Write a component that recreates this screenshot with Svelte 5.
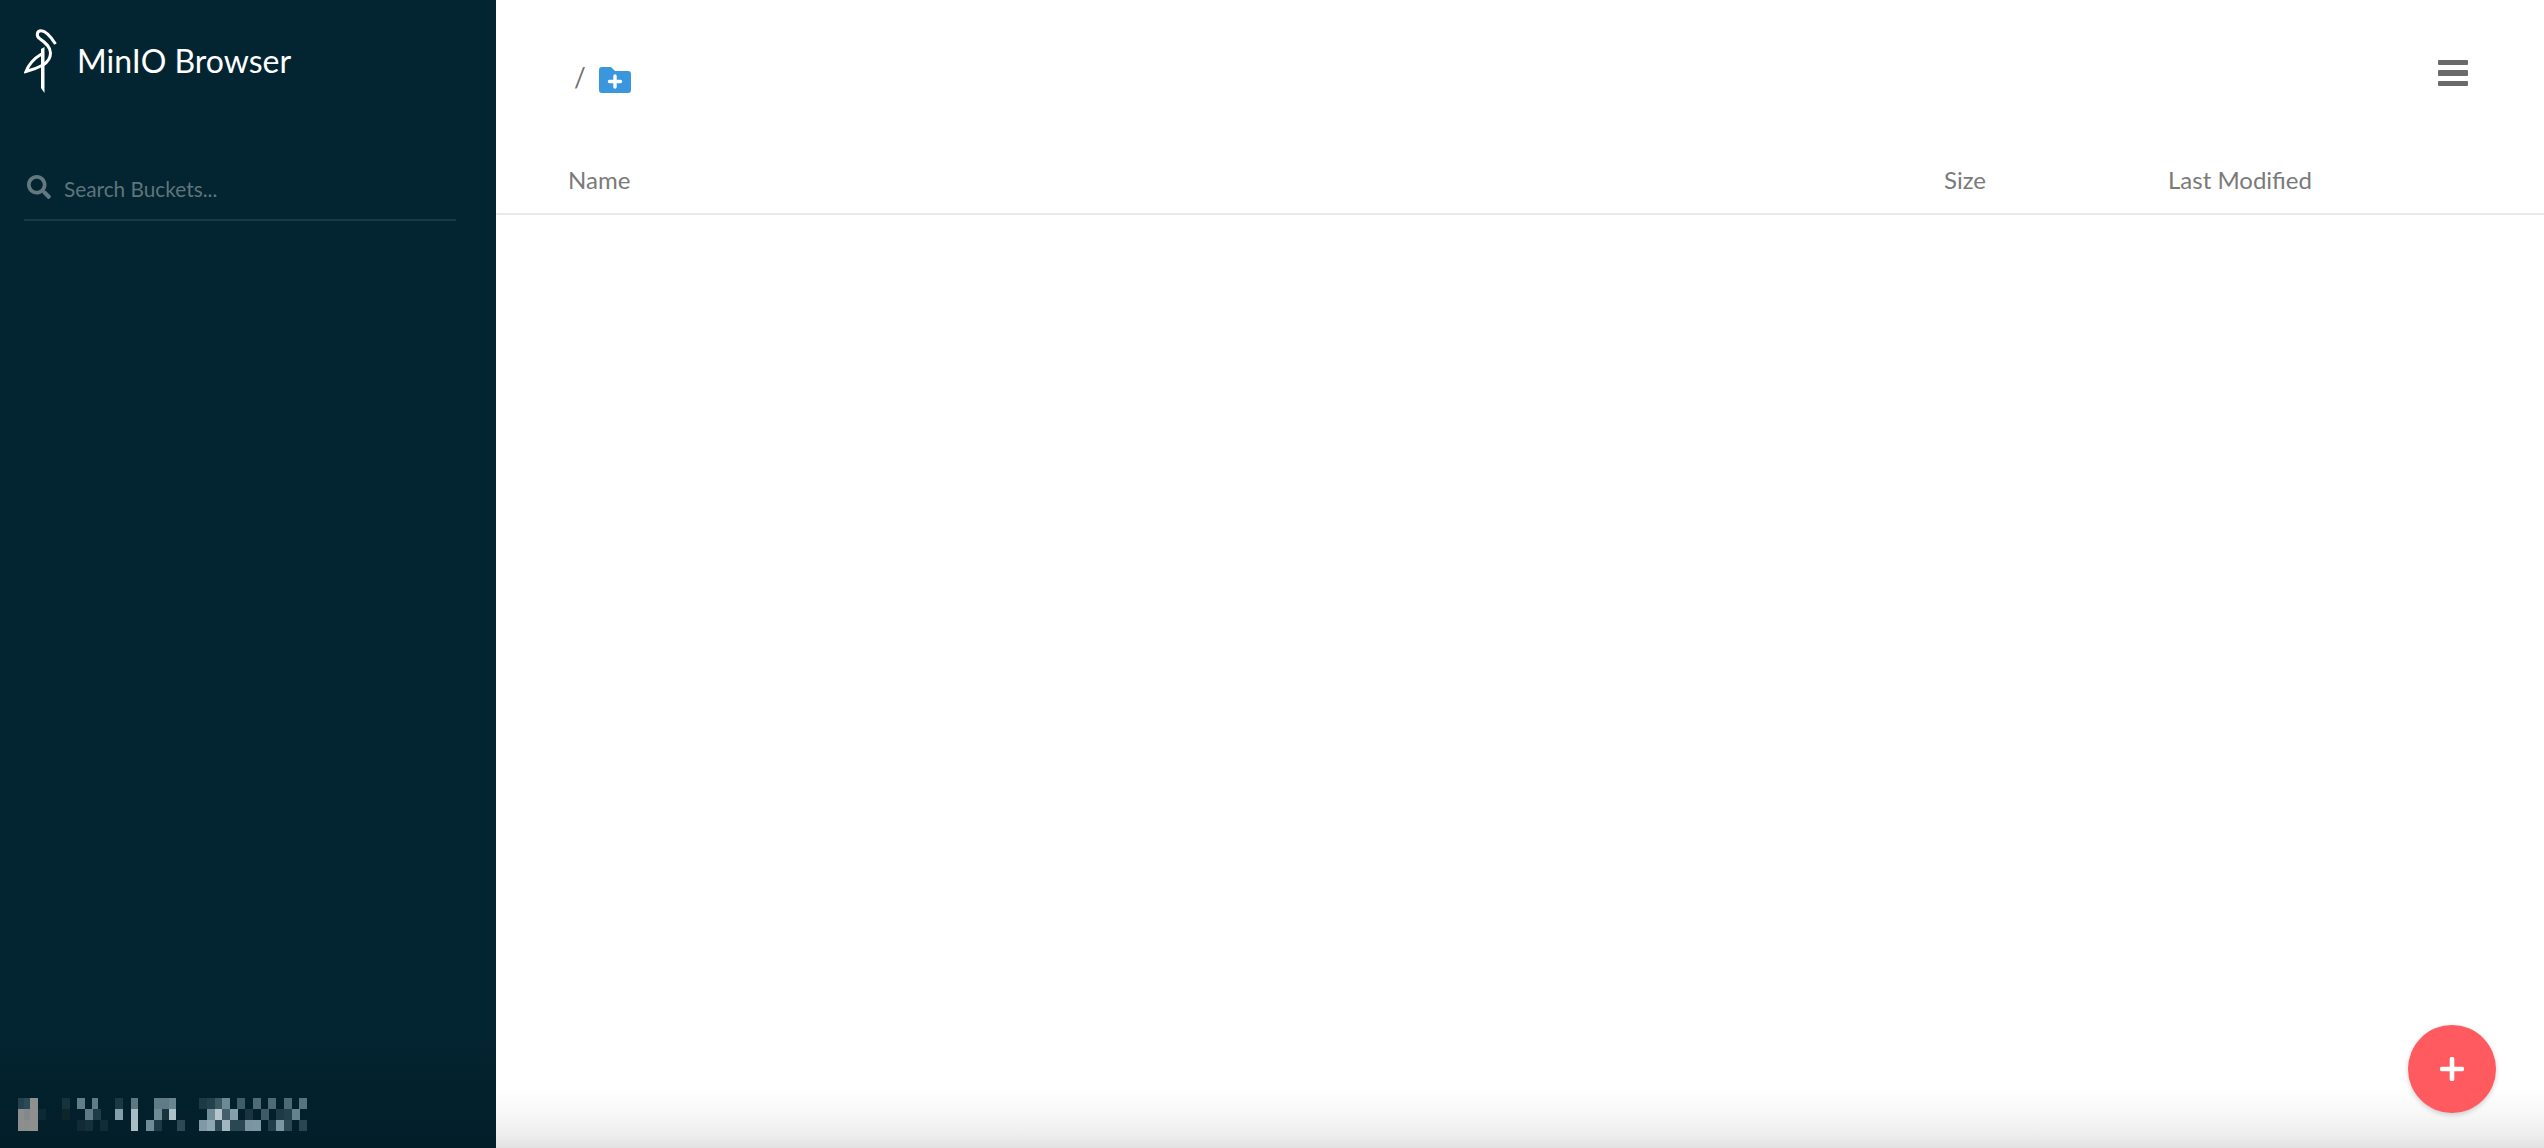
<script lang="ts">
  // Footer label is pixelated in the source, so it is a list of [x, y, w, colour] mosaic cells.
  const CELL_H = 11;
  const mosaic: [number, number, number, string][] = [
    [18, 0, 6, '#24414d'], [24, 0, 6, '#2c4955'], [30, 0, 8, '#8d8f90'],
    [18, 1, 6, '#8b8d8e'], [24, 1, 6, '#82898b'], [30, 1, 8, '#908f8f'], [38, 1, 8, '#0c2a35'],
    [18, 2, 6, '#8d8e8e'], [24, 2, 6, '#8c8e8e'], [30, 2, 8, '#8f8f8f'],
    [62, 0, 8, '#16323d'], [77, 0, 8, '#627f89'], [92, 0, 6, '#607c87'],
    [62, 1, 8, '#0e252c'], [85, 1, 8, '#5e7a85'], [93, 1, 8, '#1e3b47'],
    [77, 2, 8, '#122a33'], [85, 2, 8, '#16303a'], [100, 2, 8, '#122c35'],
    [115, 0, 8, '#1a3945'], [131, 0, 7, '#5b7883'],
    [115, 1, 8, '#83a0aa'], [131, 1, 7, '#a7bcc4'],
    [131, 2, 7, '#a9bdc5'],
    [154, 0, 8, '#5f7b86'], [162, 0, 7, '#5f7b86'], [169, 0, 7, '#698690'],
    [154, 1, 8, '#6f8b95'], [162, 1, 7, '#19343f'], [169, 1, 7, '#adc1c8'],
    [146, 2, 8, '#708c96'], [154, 2, 8, '#1e3a46'], [177, 2, 8, '#2c4955'],
    [199, 0, 8, '#1d3945'], [207, 0, 8, '#22414d'], [215, 0, 7, '#3b5965'], [222, 0, 8, '#6d8a94'],
    [237, 0, 8, '#3f5d69'], [253, 0, 8, '#4e6b76'], [268, 0, 8, '#4d6a75'], [284, 0, 8, '#4c6a75'], [299, 0, 8, '#567480'],
    [207, 1, 8, '#718d97'], [215, 1, 7, '#b5c6cc'], [222, 1, 8, '#425f6b'], [230, 1, 8, '#85a0aa'],
    [245, 1, 8, '#1a3541'], [261, 1, 8, '#3f5b67'], [276, 1, 8, '#1e3a46'], [284, 1, 8, '#23404c'], [292, 1, 8, '#658290'],
    [199, 2, 8, '#7f9aa4'], [207, 2, 8, '#8ea7b0'], [215, 2, 7, '#2d4a56'], [222, 2, 8, '#a1b6be'],
    [230, 2, 8, '#2a4753'], [238, 2, 8, '#2a4753'], [245, 2, 8, '#7a95a0'], [253, 2, 8, '#7c97a1'],
    [268, 2, 8, '#223e4a'], [276, 2, 8, '#7b96a0'], [284, 2, 8, '#2b4854'], [299, 2, 8, '#2a4652']
  ];
</script>

<div class="app">
  <aside class="sidebar">
    <header class="brand">
      <svg class="bird" viewBox="0 0 33 64" aria-hidden="true">
        <path class="line" d="M31.500 15 C27 8 21.500 1.800 17 1.800 C12.800 1.800 12 7 15.500 9.500 C22 14 26.500 18 26.500 24 C26.500 30 23 33.500 19 36" stroke-width="3" />
        <path class="line" d="M17.500 25 C10 29.500 4.500 36 2 42.500 C8 41 13.500 39 19 36" stroke-width="3" />
        <path d="M17 20 L20.500 18 L20.500 64 L17 59 Z" />
      </svg>
      <h1>MinIO Browser</h1>
    </header>

    <label class="search">
      <svg viewBox="0 0 512 512" aria-hidden="true">
        <path d="M505 442.700L405.300 343c-4.500-4.500-10.600-7-17-7H372c27.600-35.300 44-79.700 44-128C416 93.100 322.900 0 208 0S0 93.100 0 208s93.100 208 208 208c48.300 0 92.700-16.400 128-44v16.300c0 6.400 2.500 12.500 7 17l99.700 99.700c9.400 9.400 24.600 9.400 33.900 0l28.300-28.300c9.400-9.400 9.400-24.600.1-34zM208 336c-70.700 0-128-57.200-128-128 0-70.700 57.200-128 128-128 70.700 0 128 57.200 128 128 0 70.700-57.200 128-128 128z" />
      </svg>
      <span>Search Buckets...</span>
    </label>

    <div class="host" aria-hidden="true">
      {#each mosaic as [x, row, w, color]}
        <i style:left="{x}px" style:top="{row * CELL_H}px" style:width="{w}px" style:background={color}></i>
      {/each}
    </div>
  </aside>

  <main class="content">
    <div class="topbar">
      <div class="path">
        <span>/</span>
        <svg viewBox="0 0 32 26" aria-hidden="true">
          <path d="M3 0H12L16 4H29A3 3 0 0 1 32 7V23A3 3 0 0 1 29 26H3A3 3 0 0 1 0 23V3A3 3 0 0 1 3 0Z" fill="#3a96dd" />
          <path d="M16 9V20M10.500 14.500H21.500" stroke="#fff" stroke-width="3.400" stroke-linecap="round" fill="none" />
        </svg>
      </div>
      <button class="menu" aria-label="Menu"><i></i><i></i><i></i></button>
    </div>

    <div class="columns">
      <div class="col-name">Name</div>
      <div class="col-size">Size</div>
      <div class="col-date">Last Modified</div>
    </div>

    <div class="fade"></div>
    <button class="fab" aria-label="Add">
      <svg viewBox="0 0 24 24" aria-hidden="true">
        <path d="M12 2V22M2 12H22" stroke="#fff" stroke-width="4.600" stroke-linecap="round" fill="none" />
      </svg>
    </button>
  </main>
</div>

<style>
  :global(body) {
    margin: 0;
    font-family: Lato, 'Open Sans', sans-serif;
  }
  .app {
    display: grid;
    grid-template-columns: 496px 1fr;
    height: 1148px;
    overflow: hidden;
  }
  .sidebar {
    position: relative;
    display: flex;
    flex-direction: column;
    padding: 0 24px;
    background: linear-gradient(180deg, #032431 0%, #032431 90%, #021e29 100%);
  }
  .brand {
    display: flex;
    align-items: flex-start;
    gap: 20px;
    height: 144px;
    padding-top: 29px;
    box-sizing: border-box;
  }
  .bird {
    width: 33px;
    height: 64px;
    fill: #fff;
    flex: none;
  }
  .bird .line {
    fill: none;
    stroke: #fff;
  }
  h1 {
    margin: 13px 0 0;
    color: #fff;
    font-size: 32px;
    line-height: 38px;
    font-weight: 400;
  }
  .search {
    display: flex;
    align-items: center;
    gap: 13px;
    width: 432px;
    height: 77px;
    box-sizing: border-box;
    padding: 13px 4px 0 3px;
    border-bottom: 2px solid #1a3948;
    color: #5f747c;
    font-size: 20.800px;
  }
  .search svg {
    width: 24px;
    height: 24px;
    fill: #64797f;
    flex: none;
    margin-top: -2px;
  }
  .host {
    position: absolute;
    left: 0;
    top: 1098px;
  }
  .host i {
    position: absolute;
    height: 11px;
  }
  .content {
    position: relative;
    background: #fff;
    min-width: 0;
  }
  .topbar {
    display: flex;
    justify-content: space-between;
    height: 144px;
    padding: 62px 76px 0 78px;
    box-sizing: border-box;
  }
  .path {
    display: flex;
    align-items: flex-start;
    gap: 13px;
    color: #6f6f6f;
    font-size: 26px;
    line-height: 30px;
  }
  .path svg {
    width: 32px;
    height: 26px;
    margin-top: 5px;
  }
  .menu {
    display: flex;
    flex-direction: column;
    gap: 5px;
    width: 30px;
    height: 26px;
    padding: 0;
    border: 0;
    background: none;
    margin-top: -2px;
  }
  .menu i {
    display: block;
    width: 30px;
    height: 6px;
    border-radius: 1px;
    background: #6a6a6a;
  }
  .columns {
    display: grid;
    grid-template-columns: 1376px 224px 1fr;
    align-items: center;
    height: 71px;
    padding: 2px 0 0 72px;
    box-sizing: border-box;
    border-bottom: 2px solid #eaeaea;
    color: #7a7a7a;
    font-size: 24px;
  }
  .fade {
    position: absolute;
    left: 0;
    right: 0;
    bottom: 0;
    height: 60px;
    background: linear-gradient(180deg, rgba(228, 228, 228, 0) 0%, rgba(228, 228, 228, 0.25) 40%, rgba(228, 228, 228, 0.6) 75%, #e2e2e2 100%);
  }
  .fab {
    position: absolute;
    right: 48px;
    bottom: 35px;
    display: flex;
    align-items: center;
    justify-content: center;
    width: 88px;
    height: 88px;
    padding: 0;
    border: 0;
    border-radius: 50%;
    background: #ff5a60;
    box-shadow: 0 2px 5px rgba(0, 0, 0, 0.18);
  }
  .fab svg {
    width: 24px;
    height: 24px;
  }
</style>
